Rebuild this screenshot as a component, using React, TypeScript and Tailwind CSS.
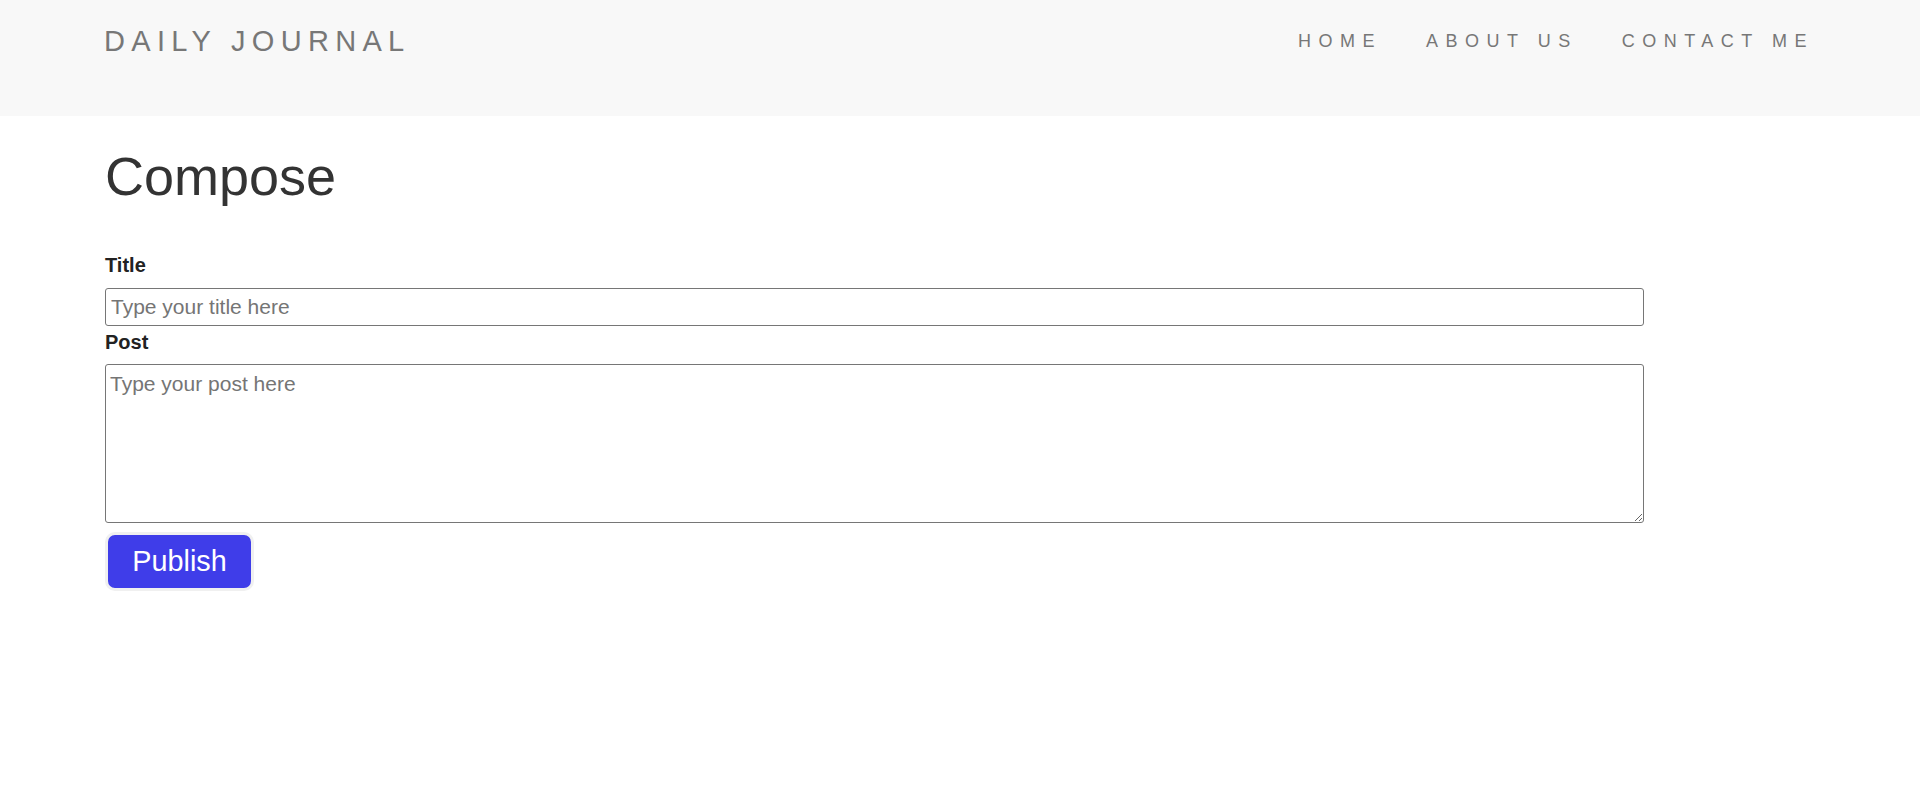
const navLinks = ["HOME", "ABOUT US", "CONTACT ME"];

export default function App() {
  return (
    <div className="min-h-[805px] bg-white font-['Liberation_Sans',Arial,sans-serif]">
      <header className="flex h-[116px] items-start justify-between bg-[#f8f8f8] pl-[104px] pr-[106px]">
        <a className="pt-[25px] text-[29px] leading-[33px] tracking-[6.3px] text-[#777777]">
          DAILY JOURNAL
        </a>
        <nav className="mt-[31px] flex gap-[44px]">
          {navLinks.map((link) => (
            <a
              key={link}
              className="text-[18px] leading-[21px] tracking-[7.5px] text-[#777777]"
            >
              {link}
            </a>
          ))}
        </nav>
      </header>

      <main className="flex flex-col items-start px-[105px]">
        <h1 className="mt-[29px] text-[54px] leading-[62px] font-normal text-[#333333]">
          Compose
        </h1>

        <label className="mt-[47px] text-[20px] leading-[23px] font-bold text-[#222222]">
          Title
        </label>
        <input
          type="text"
          placeholder="Type your title here"
          className="mt-[11px] h-[38px] w-[1539px] rounded-[3px] border border-[#767676] px-[5px] text-[21px] text-[#222222] placeholder:text-[#757575] outline-none"
        />

        <label className="mt-[5px] text-[20px] leading-[23px] font-bold text-[#222222]">
          Post
        </label>
        <textarea
          placeholder="Type your post here"
          className="mt-[10px] h-[159px] w-[1539px] rounded-[3px] border border-[#767676] px-[4px] pt-[7px] text-[21px] leading-[24px] text-[#222222] placeholder:text-[#757575] outline-none"
        />

        <button className="mt-[9px] h-[59px] w-[149px] rounded-[10px] border-[3px] border-[#f0f0f0] bg-[#3f3de9] pb-[1px] text-[28.8px] leading-[33px] text-white">
          Publish
        </button>
      </main>
    </div>
  );
}
